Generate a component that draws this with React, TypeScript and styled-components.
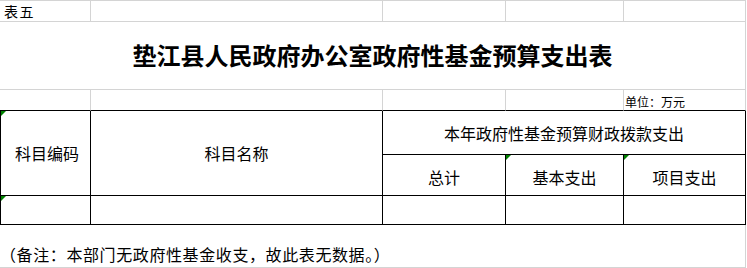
import React from 'react';
import styled, { createGlobalStyle } from 'styled-components';

const GRAY = '#d4d4d4';
const BLACK = '#000000';

const Global = createGlobalStyle`
  html, body { margin: 0; padding: 0; background: #ffffff; }
  body { font-family: "Noto Sans CJK SC", "Noto Sans", sans-serif; color: #000; }
`;

const Sheet = styled.div`
  display: grid;
  grid-template-columns: 91px 292px 123px 118px 122px;
  grid-template-rows: 22px 68px 21px 44px 41px 29px 43px;
  width: 746px;
`;

type CellProps = {
  $span?: number;
  $rows?: number;
  $top?: string;
  $left?: string;
  $right?: string;
  $bottom?: string;
  $justify?: string;
  $align?: string;
  $pad?: string;
};

const line = (c?: string) => (c ? `1px solid ${c}` : 'none');

const Cell = styled.div<CellProps>`
  position: relative;
  box-sizing: border-box;
  grid-column: span ${(p) => p.$span ?? 1};
  grid-row: span ${(p) => p.$rows ?? 1};
  border-top: ${(p) => line(p.$top)};
  border-left: ${(p) => line(p.$left)};
  border-right: ${(p) => line(p.$right)};
  border-bottom: ${(p) => line(p.$bottom)};
  display: flex;
  justify-content: ${(p) => p.$justify ?? 'center'};
  align-items: ${(p) => p.$align ?? 'center'};
  padding: ${(p) => p.$pad ?? '0'};
  overflow: hidden;
  white-space: nowrap;
`;

const Marker = styled.span`
  position: absolute;
  top: 0;
  left: 0;
  width: 0;
  height: 0;
  border-top: 5px solid #008000;
  border-right: 5px solid transparent;
`;

const SheetLabel = styled.span`
  font-family: "Noto Sans CJK SC", sans-serif;
  font-size: 14px;
  line-height: 14px;
  letter-spacing: 1.5px;
`;

const Title = styled.h1`
  margin: 0;
  font-family: "Noto Sans CJK SC", sans-serif;
  font-weight: 700;
  font-size: 24px;
  line-height: 24px;
`;

const Unit = styled.span`
  font-size: 12px;
  line-height: 12px;
`;

const HeadText = styled.span`
  font-size: 16px;
  line-height: 16px;
`;

const Note = styled.span`
  font-size: 16px;
  line-height: 16px;
  letter-spacing: 0.6px;
`;

const blankTop = [0, 1, 2, 3, 4];

export default function App() {
  return (
    <>
      <Global />
      <Sheet>
        {/* row 1 */}
        <Cell $top={GRAY} $right={GRAY} $bottom={GRAY} $justify="flex-start" $pad="0 0 0 4px">
          <SheetLabel>表五</SheetLabel>
        </Cell>
        {blankTop.slice(1).map((i) => (
          <Cell key={`r1-${i}`} $top={GRAY} $right={GRAY} $bottom={GRAY} />
        ))}

        {/* row 2: title */}
        <Cell $span={5} $right={GRAY} $bottom={GRAY} $pad="0 0 2px 0">
          <Title>垫江县人民政府办公室政府性基金预算支出表</Title>
        </Cell>

        {/* row 3: unit */}
        {blankTop.slice(0, 4).map((i) => (
          <Cell key={`r3-${i}`} $right={GRAY} $bottom={BLACK} />
        ))}
        <Cell $right={GRAY} $bottom={BLACK} $justify="flex-start" $align="flex-end" $pad="0 0 2px 1px">
          <Unit>单位：万元</Unit>
        </Cell>

        {/* row 4-5: header */}
        <Cell $rows={2} $left={BLACK} $right={BLACK} $bottom={BLACK} $pad="0 0 0 3px">
          <Marker />
          <HeadText>科目编码</HeadText>
        </Cell>
        <Cell $rows={2} $right={BLACK} $bottom={BLACK}>
          <HeadText>科目名称</HeadText>
        </Cell>
        <Cell $span={3} $right={BLACK} $bottom={BLACK} $pad="1px 0 0 0">
          <HeadText>本年政府性基金预算财政拨款支出</HeadText>
        </Cell>
        <Cell $right={BLACK} $bottom={BLACK} $pad="3px 0 0 0">
          <HeadText>总计</HeadText>
        </Cell>
        <Cell $right={BLACK} $bottom={BLACK} $pad="3px 0 0 0">
          <Marker />
          <HeadText>基本支出</HeadText>
        </Cell>
        <Cell $right={BLACK} $bottom={BLACK} $pad="3px 0 0 0">
          <Marker />
          <HeadText>项目支出</HeadText>
        </Cell>

        {/* row 6: empty data row */}
        <Cell $left={BLACK} $right={BLACK} $bottom={BLACK}>
          <Marker />
        </Cell>
        {blankTop.slice(1).map((i) => (
          <Cell key={`r6-${i}`} $right={BLACK} $bottom={BLACK} />
        ))}

        {/* row 7: note */}
        <Cell $span={5} $right={GRAY} $bottom={GRAY} $justify="flex-start" $align="flex-end" $pad="0 0 5px 0">
          <Note>（备注：本部门无政府性基金收支，故此表无数据。）</Note>
        </Cell>
      </Sheet>
    </>
  );
}
